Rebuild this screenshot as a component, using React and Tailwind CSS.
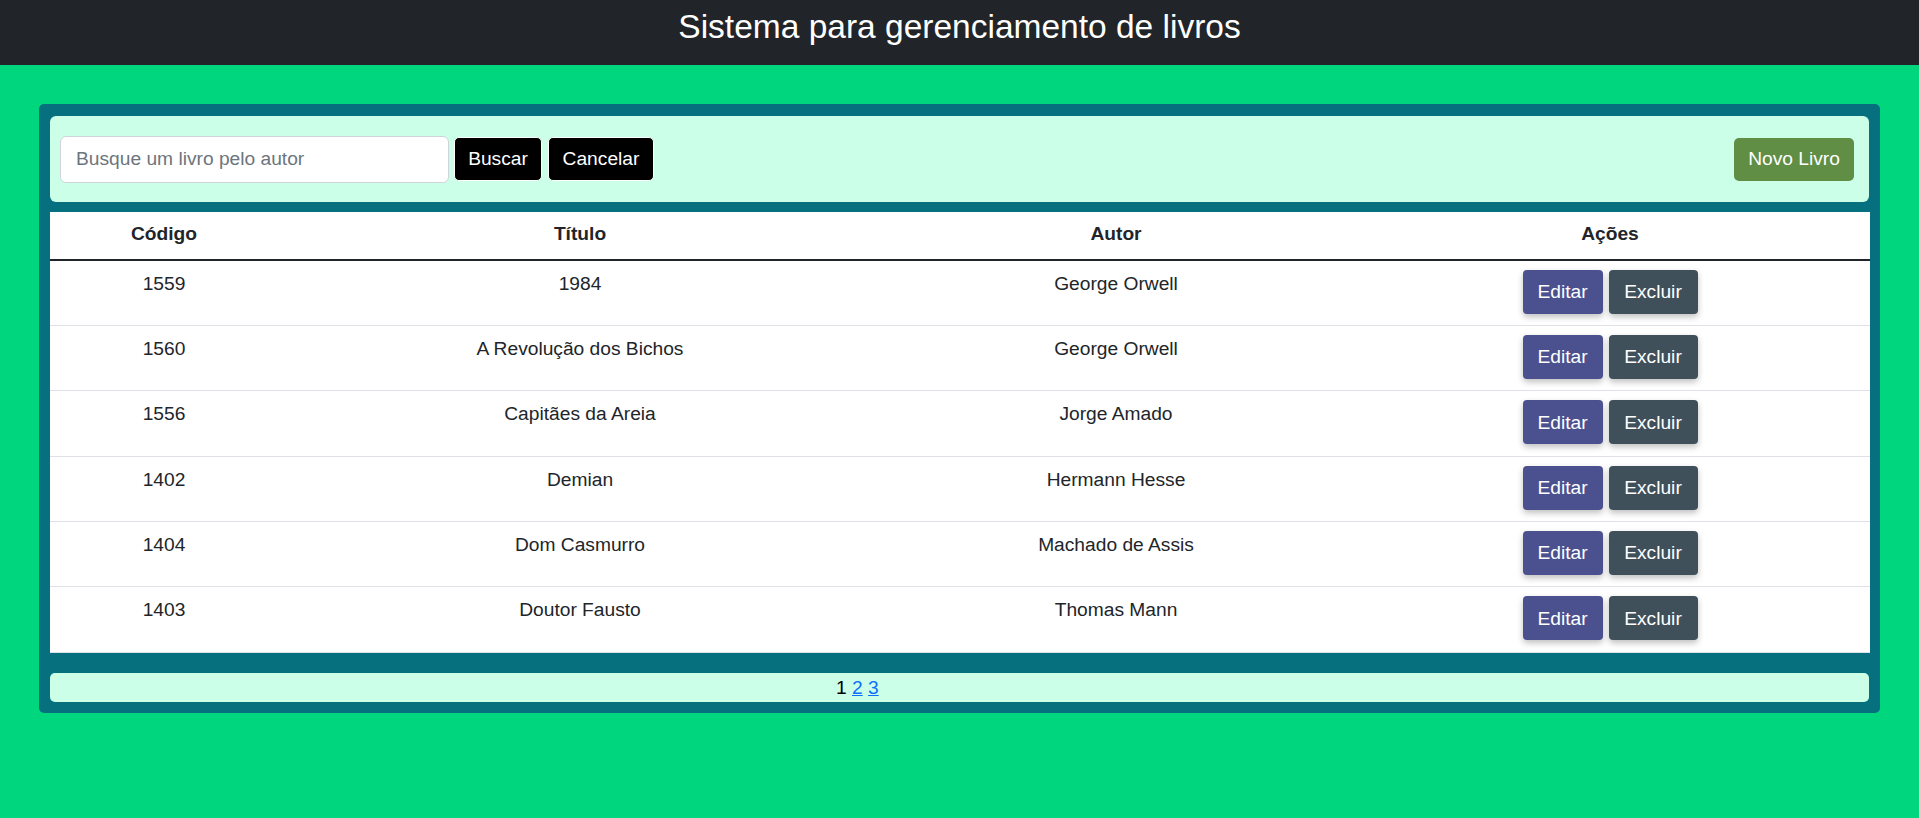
import React from "react";

const books = [
  { id: 1559, title: "1984", author: "George Orwell" },
  { id: 1560, title: "A Revolução dos Bichos", author: "George Orwell" },
  { id: 1556, title: "Capitães da Areia", author: "Jorge Amado" },
  { id: 1402, title: "Demian", author: "Hermann Hesse" },
  { id: 1404, title: "Dom Casmurro", author: "Machado de Assis" },
  { id: 1403, title: "Doutor Fausto", author: "Thomas Mann" },
];

export default function App() {
  return (
    <div className="min-h-[818px] bg-[#00d67e] font-['Liberation_Sans',Arial,sans-serif] text-[19.2px] text-[#212529]">
      <header className="h-[65px] bg-[#212529] pt-[7px] text-center">
        <h1 className="text-[33.5px] font-normal leading-[40px] text-white">
          Sistema para gerenciamento de livros
        </h1>
      </header>

      <main className="mx-[39px] mt-[39px] rounded-[5px] bg-[#06707e] px-[11px] pb-[11px] pt-[12px]">
        <div className="flex h-[86px] items-center justify-between rounded-[6px] bg-[#ccffe8] pl-[10px] pr-[15px]">
          <div className="flex items-center">
            <input
              type="text"
              placeholder="Busque um livro pelo autor"
              className="h-[47px] w-[389px] rounded-[6px] border border-[#ced4da] bg-white px-[15px] text-[19.2px] text-[#212529] outline-none placeholder:text-[#6c757d]"
            />
            <button className="ml-[5px] h-[44px] w-[88px] rounded-[5px] border-[1.5px] border-white bg-black text-[19.2px] leading-none text-white">
              Buscar
            </button>
            <button className="ml-[6px] h-[44px] w-[106px] rounded-[5px] border-[1.5px] border-white bg-black text-[19.2px] leading-none text-white">
              Cancelar
            </button>
          </div>
          <button className="h-[43px] w-[120px] rounded-[5px] bg-[#5f8e44] text-[19.2px] leading-none text-white">
            Novo Livro
          </button>
        </div>

        <table className="mt-[10px] w-full table-fixed border-collapse bg-white">
          <colgroup>
            <col className="w-[228px]" />
            <col className="w-[604px]" />
            <col className="w-[468px]" />
            <col className="w-[520px]" />
          </colgroup>
          <thead>
            <tr className="border-b-2 border-[#212529]">
              <th className="pb-[10px] pt-[8px] text-center font-bold leading-[28.8px]">Código</th>
              <th className="pb-[10px] pt-[8px] text-center font-bold leading-[28.8px]">Título</th>
              <th className="pb-[10px] pt-[8px] text-center font-bold leading-[28.8px]">Autor</th>
              <th className="pb-[10px] pt-[8px] text-center font-bold leading-[28.8px]">Ações</th>
            </tr>
          </thead>
          <tbody>
            {books.map((b) => (
              <tr key={b.id} className="border-b border-[#dee2e6]">
                <td className="pb-[11.3px] pt-[9px] text-center align-top leading-[28.8px]">{b.id}</td>
                <td className="pb-[11.3px] pt-[9px] text-center align-top leading-[28.8px]">{b.title}</td>
                <td className="pb-[11.3px] pt-[9px] text-center align-top leading-[28.8px]">{b.author}</td>
                <td className="pb-[11.3px] pt-[9px] align-top">
                  <div className="flex justify-center gap-[6px]">
                    <button className="h-[44px] w-[80px] rounded-[4px] bg-[#4b508f] text-[19.2px] leading-none text-white shadow-[0_3px_6px_rgba(0,0,0,0.25)]">
                      Editar
                    </button>
                    <button className="h-[44px] w-[89px] rounded-[4px] bg-[#3f505b] text-[19.2px] leading-none text-white shadow-[0_3px_6px_rgba(0,0,0,0.25)]">
                      Excluir
                    </button>
                  </div>
                </td>
              </tr>
            ))}
          </tbody>
        </table>

        <div className="mt-[20px] h-[29px] rounded-[5px] bg-[#ccffe8] pl-[786px] leading-[29px] text-black">
          <span>1</span>{" "}
          <a href="#" className="text-[#0d6efd] underline">2</a>{" "}
          <a href="#" className="text-[#0d6efd] underline">3</a>
        </div>
      </main>
    </div>
  );
}
